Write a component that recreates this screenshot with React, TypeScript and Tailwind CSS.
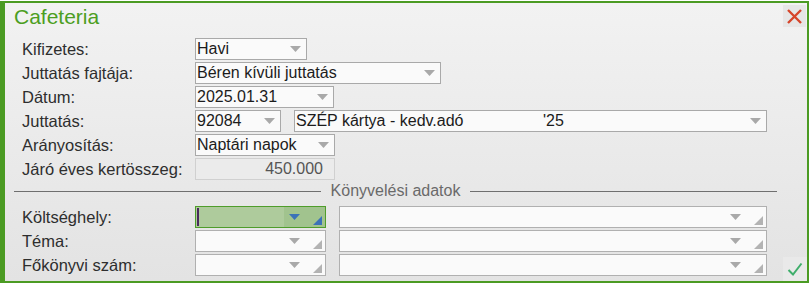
import React from 'react';

const Arrow: React.FC<{ color?: string }> = ({ color = '#a9a9a9' }) => (
  <svg width="11" height="6" viewBox="0 0 11 6" className="shrink-0">
    <polygon points="0,0 11,0 5.5,6" fill={color} />
  </svg>
);

const Corner: React.FC<{ color?: string }> = ({ color = '#b3b3b3' }) => (
  <svg width="9" height="9" viewBox="0 0 9 9" className="shrink-0">
    <polygon points="9,0 9,9 0,9" fill={color} />
  </svg>
);

interface SelectProps {
  width: string;
  value?: string;
  extra?: string;
}

const Select: React.FC<SelectProps> = ({ width, value, extra }) => (
  <div className={`${width} h-[22px] flex items-center border border-[#a9a9a9] bg-[#fafafa] pl-[1px] pr-[5px]`}>
    <div className="flex-1 flex text-[16px] leading-[20px] text-[#1c1c1c] whitespace-nowrap">
      {extra ? (
        <>
          <span className="w-[247px]">{value}</span>
          <span>{extra}</span>
        </>
      ) : (
        <span>{value}</span>
      )}
    </div>
    <Arrow />
  </div>
);

const LookupBox: React.FC<{ width: string }> = ({ width }) => (
  <div className={`${width} h-[22px] flex items-center border border-[#b0b0b0] bg-[#fafafa] pr-[3px]`}>
    <div className="flex-1" />
    <Arrow />
    <div className="w-[13px]" />
    <div className="self-end mb-[2px]">
      <Corner />
    </div>
  </div>
);

const Label: React.FC<{ text: string }> = ({ text }) => (
  <div className="w-[173px] shrink-0 text-[16.5px] leading-[20px] text-[#2e2e2e]">{text}</div>
);

const Row: React.FC<{ label: string; children: React.ReactNode }> = ({ label, children }) => (
  <div className="h-[22px] flex items-center">
    <Label text={label} />
    {children}
  </div>
);

export default function App() {
  return (
    <div className="w-[809px] h-[283px] bg-white pt-px font-['Liberation_Sans',Arial,sans-serif]">
      <div className="relative h-[282px] border-t-2 border-r-2 border-b-2 border-l-[5px] border-[#4b9b23] bg-gradient-to-b from-[#f2f2f2] to-[#e3e3e3] flex flex-col">
        <div className="h-[35px] flex items-start justify-between pl-[9px] pr-[1px]">
          <div className="text-[21px] leading-[26px] text-[#4c9e22] pt-[1px]">Cafeteria</div>
          <div className="w-[23px] h-[22px] mt-[2px] bg-[#e6e6e6] flex items-center justify-center">
            <svg width="15" height="15" viewBox="0 0 15 15">
              <path d="M1 1 L14 14 M14 1 L1 14" stroke="#d6452a" strokeWidth="2.4" />
            </svg>
          </div>
        </div>

        <div className="flex flex-col gap-[2px] pl-[17px]">
          <Row label="Kifizetes:">
            <Select width="w-[112px]" value="Havi" />
          </Row>
          <Row label="Juttatás fajtája:">
            <Select width="w-[246px]" value="Béren kívüli juttatás" />
          </Row>
          <Row label="Dátum:">
            <Select width="w-[139px]" value="2025.01.31" />
          </Row>
          <Row label="Juttatás:">
            <div className="flex gap-[13px]">
              <Select width="w-[86px]" value="92084" />
              <Select width="w-[473px]" value="SZÉP kártya - kedv.adó" extra="'25" />
            </div>
          </Row>
          <Row label="Arányosítás:">
            <Select width="w-[140px]" value="Naptári napok" />
          </Row>
          <Row label="Járó éves kertösszeg:">
            <div className="w-[140px] h-[22px] flex items-center justify-end border border-[#d0d0d0] bg-[#ebebeb] pr-[11px] text-[16px] leading-[20px] text-[#555]">
              450.000
            </div>
          </Row>
        </div>

        <div className="h-[22px] flex items-center ml-[9px] mr-[30px]">
          <div className="flex-1 h-px bg-[#6f6f6f]" />
          <div className="px-[10px] text-[16px] leading-[20px] text-[#6a6a6a]">Könyvelési adatok</div>
          <div className="flex-1 h-px bg-[#6f6f6f]" />
        </div>

        <div className="flex flex-col gap-[2px] pl-[17px] mt-[4px]">
          <Row label="Költséghely:">
            <div className="flex gap-[13px]">
              <div className="w-[131px] h-[22px] flex items-center border-[1.5px] border-[#4f9d2b] bg-[#aecb9c]">
                <div className="w-[2px] h-[18px] ml-[1px] bg-[#4a2b5e]" />
                <div className="flex-1" />
                <div className="w-[41px] h-full flex items-center bg-[#a1c38e] pl-[5px] pr-[3px]">
                  <Arrow color="#3b72b8" />
                  <div className="flex-1" />
                  <div className="self-end mb-[2px]">
                    <Corner color="#3b72b8" />
                  </div>
                </div>
              </div>
              <LookupBox width="w-[428px]" />
            </div>
          </Row>
          <Row label="Téma:">
            <div className="flex gap-[13px]">
              <LookupBox width="w-[131px]" />
              <LookupBox width="w-[428px]" />
            </div>
          </Row>
          <Row label="Főkönyvi szám:">
            <div className="flex gap-[13px]">
              <LookupBox width="w-[131px]" />
              <LookupBox width="w-[428px]" />
            </div>
          </Row>
        </div>

        <div className="absolute right-0 bottom-0 w-[24px] h-[24px] bg-[#e9e9e9] flex items-center justify-center">
          <svg width="16" height="14" viewBox="0 0 16 14">
            <path d="M1.5 8 L6 12.5 L14.5 1.5" stroke="#3fae6b" strokeWidth="2" fill="none" />
          </svg>
        </div>
      </div>
    </div>
  );
}
